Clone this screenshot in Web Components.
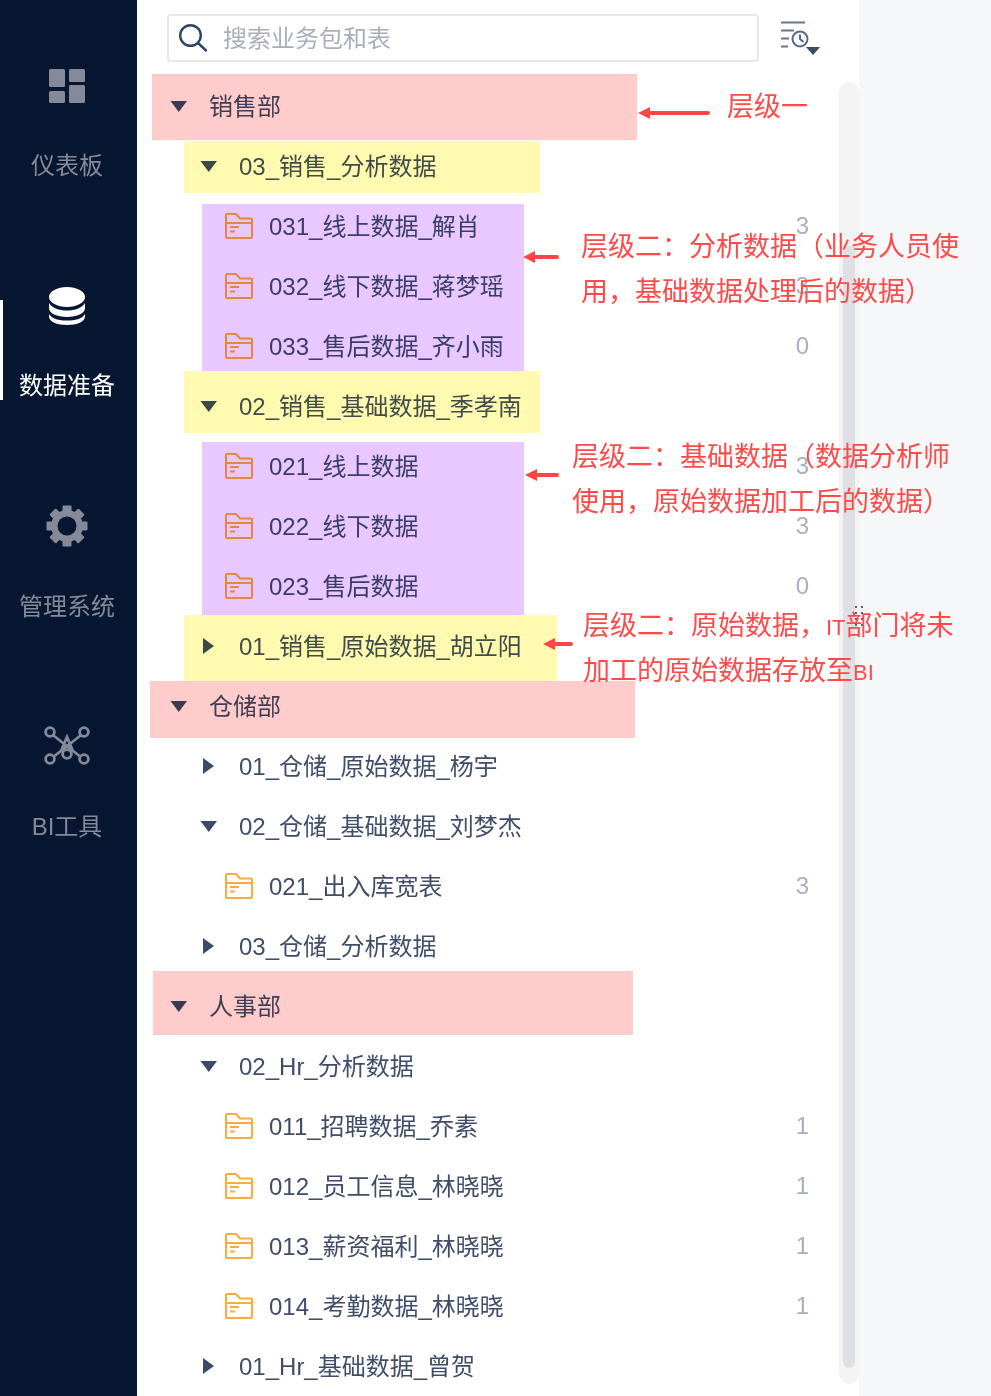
<!DOCTYPE html>
<html lang="zh">
<head>
<meta charset="utf-8">
<title>数据准备</title>
<style>
  html, body {
    margin: 0;
    height: 100%;
    background: #f6f7f9;
    font-family: "Liberation Sans", "Noto Sans CJK SC", sans-serif;
  }
  body { overflow: hidden; }
</style>
</head>
<body>
<app-shell>
  <side-nav slot="nav">
    <nav-item icon="dashboard">仪表板</nav-item>
    <nav-item icon="database" active>数据准备</nav-item>
    <nav-item icon="gear">管理系统</nav-item>
    <nav-item icon="bi">BI工具</nav-item>
  </side-nav>
  <search-bar slot="search" placeholder="搜索业务包和表"></search-bar>

  <tree-row level="0" caret="down">销售部</tree-row>
  <tree-row level="1" caret="down">03_销售_分析数据</tree-row>
  <tree-row level="2" folder count="3">031_线上数据_解肖</tree-row>
  <tree-row level="2" folder count="3">032_线下数据_蒋梦瑶</tree-row>
  <tree-row level="2" folder count="0">033_售后数据_齐小雨</tree-row>
  <tree-row level="1" caret="down">02_销售_基础数据_季孝南</tree-row>
  <tree-row level="2" folder count="3">021_线上数据</tree-row>
  <tree-row level="2" folder count="3">022_线下数据</tree-row>
  <tree-row level="2" folder count="0">023_售后数据</tree-row>
  <tree-row level="1" caret="right">01_销售_原始数据_胡立阳</tree-row>
  <tree-row level="0" caret="down">仓储部</tree-row>
  <tree-row level="1" caret="right">01_仓储_原始数据_杨宇</tree-row>
  <tree-row level="1" caret="down">02_仓储_基础数据_刘梦杰</tree-row>
  <tree-row level="2" folder count="3">021_出入库宽表</tree-row>
  <tree-row level="1" caret="right">03_仓储_分析数据</tree-row>
  <tree-row level="0" caret="down">人事部</tree-row>
  <tree-row level="1" caret="down">02_Hr_分析数据</tree-row>
  <tree-row level="2" folder count="1">011_招聘数据_乔素</tree-row>
  <tree-row level="2" folder count="1">012_员工信息_林晓晓</tree-row>
  <tree-row level="2" folder count="1">013_薪资福利_林晓晓</tree-row>
  <tree-row level="2" folder count="1">014_考勤数据_林晓晓</tree-row>
  <tree-row level="1" caret="right">01_Hr_基础数据_曾贺</tree-row>

  <!-- 标注层: 截图上画的色块、箭头和说明 -->
  <mark-box slot="overlay" tone="pink" box="152,74,485,66"></mark-box>
  <mark-box slot="overlay" tone="yellow" box="184,141,356,52"></mark-box>
  <mark-box slot="overlay" tone="purple" box="202,204,322,167"></mark-box>
  <mark-box slot="overlay" tone="yellow" box="184,371,356,62"></mark-box>
  <mark-box slot="overlay" tone="purple" box="202,442,322,173"></mark-box>
  <mark-box slot="overlay" tone="yellow" box="184,615,373,66"></mark-box>
  <mark-box slot="overlay" tone="pink" box="150,681,485,57"></mark-box>
  <mark-box slot="overlay" tone="pink" box="153,971,480,64"></mark-box>

  <note-arrow slot="overlay" box="638,113,72"></note-arrow>
  <note-arrow slot="overlay" box="523,257,36"></note-arrow>
  <note-arrow slot="overlay" box="525,475,34"></note-arrow>
  <note-arrow slot="overlay" box="543,644,30"></note-arrow>

  <note-text slot="overlay" at="727,85">层级一</note-text>
  <note-text slot="overlay" at="581,225">层级二：分析数据（业务人员使<br>用，基础数据处理后的数据）</note-text>
  <note-text slot="overlay" at="572,435">层级二：基础数据（数据分析师<br>使用，原始数据加工后的数据）</note-text>
  <note-text slot="overlay" at="583,604">层级二：原始数据，<small>IT</small>部门将未<br>加工的原始数据存放至<small>BI</small></note-text>
</app-shell>

<script>
// 外壳: 左侧导航 + 中间面板 + 右侧留白
class AppShell extends HTMLElement {
  constructor() {
    super()
    this.attachShadow({ mode: 'open' }).innerHTML = `
      <style>
        :host { display: flex; height: 1396px; overflow: hidden; position: relative; }
        .nav { flex: 0 0 137px; }
        .panel {
          flex: 0 0 722px;
          background: #fff;
          padding-top: 14px;
          box-sizing: border-box;
          height: 1396px;
          overflow: hidden;
          position: relative;
        }
        .tree { margin-top: 14px; display: flex; flex-direction: column; }
        .track {
          position: absolute; left: 702px; top: 82px; width: 20px; height: 1302px;
          background: #f3f3f4; border-radius: 10px;
        }
        .thumb {
          position: absolute; left: 4px; top: 164px; width: 12px; height: 1122px;
          background: #dfe0e5; border-radius: 0 0 6px 6px;
        }
        .grip {
          position: absolute; left: 855px; top: 606px;
          display: grid; grid-template-columns: 2px 2px; gap: 4px;
        }
        .grip i { width: 2px; height: 2px; background: #4f5f7c; }
      </style>
      <div class="nav"><slot name="nav"></slot></div>
      <div class="panel">
        <slot name="search"></slot>
        <div class="tree"><slot></slot></div>
        <div class="track"><div class="thumb"></div></div>
      </div>
      <div class="grip"><i></i><i></i><i></i><i></i><i></i><i></i><i></i><i></i></div>
      <slot name="overlay"></slot>
    `
  }
}

class SideNav extends HTMLElement {
  constructor() {
    super()
    this.attachShadow({ mode: 'open' }).innerHTML = `
      <style>
        :host {
          display: flex; flex-direction: column; gap: 80px;
          height: 1396px; box-sizing: border-box; padding-top: 46px;
          background: #071631;
        }
      </style>
      <slot></slot>
    `
  }
}

const NAV_ICONS = {
  dashboard: `<svg width="36" height="34" viewBox="0 0 36 34" fill="currentColor">
      <rect x="0" y="0" width="16" height="18" rx="1.5"/><rect x="0" y="22" width="16" height="12" rx="1.5"/>
      <rect x="20" y="0" width="16" height="13" rx="1.5"/><rect x="20" y="16" width="16" height="18" rx="1.5"/>
    </svg>`,
  database: `<svg width="36" height="38" viewBox="0 0 36 38" fill="currentColor">
      <ellipse cx="18" cy="10" rx="18" ry="10"/>
      <path d="M0 16c3 5 10 7.500 18 7.500S33 21 36 16v5c0 5.500-8 9-18 9S0 26.500 0 21z"/>
      <path d="M0 27c3 5 10 6.500 18 6.500S33 32 36 27v2.500C36 34.500 28 38 18 38S0 34.500 0 29.500z"/>
    </svg>`,
  gear: `<svg width="42" height="42" viewBox="-21 -21 42 42" fill="currentColor">
      <g>
        <rect x="-4.500" y="-20.500" width="9" height="41" rx="1"/>
        <rect x="-4.500" y="-20.500" width="9" height="41" rx="1" transform="rotate(45)"/>
        <rect x="-4.500" y="-20.500" width="9" height="41" rx="1" transform="rotate(90)"/>
        <rect x="-4.500" y="-20.500" width="9" height="41" rx="1" transform="rotate(135)"/>
      </g>
      <circle r="12.500" fill="none" stroke="currentColor" stroke-width="7"/>
      <circle r="9.500" fill="#071631"/>
    </svg>`,
  bi: `<svg width="48" height="42" viewBox="0 0 48 42" fill="none" stroke="currentColor" stroke-width="2.800">
      <circle cx="7" cy="7" r="4.400"/><circle cx="41" cy="7" r="4.400"/>
      <circle cx="7" cy="34" r="4.400"/><circle cx="41" cy="34" r="4.400"/>
      <circle cx="24" cy="29" r="4.400"/>
      <path d="M10.500 10.500l26 20.500M37.500 10.500l-26 20.500M18.500 25L24 12l5.500 13"/>
    </svg>`,
}

class NavItem extends HTMLElement {
  constructor() {
    super()
    this.attachShadow({ mode: 'open' }).innerHTML = `
      <style>
        :host {
          display: flex; flex-direction: column; align-items: center; gap: 41px;
          position: relative; height: 140px; box-sizing: border-box; padding: 20px 3px 0 0;
          color: #858a98; font-size: 24px; line-height: 40px;
        }
        :host([active]) { color: #fff; }
        :host([active])::before {
          content: ''; position: absolute; left: 0; top: 34px; width: 3px; height: 100px; background: #fff;
        }
        .icon { height: 40px; display: flex; align-items: center; justify-content: center; }
        .label { height: 40px; white-space: nowrap; }
      </style>
      <div class="icon">${NAV_ICONS[this.getAttribute('icon')] || ''}</div>
      <div class="label"><slot></slot></div>
    `
  }
}

class SearchBar extends HTMLElement {
  constructor() {
    super()
    this.attachShadow({ mode: 'open' }).innerHTML = `
      <style>
        :host { display: flex; align-items: center; height: 48px; padding-left: 30px; }
        .box {
          flex: 0 0 592px; height: 48px; box-sizing: border-box;
          display: flex; align-items: center; gap: 14px; padding-left: 10px;
          border: 2px solid #e6e8ee; border-radius: 4px;
          font-size: 24px; color: #a9aebb;
        }
        .box span { padding-bottom: 4px; }
        .filter { margin-left: 22px; margin-top: 2px; display: block; }
      </style>
      <div class="box">
        <svg width="30" height="30" viewBox="0 0 30 30" fill="none" stroke="#2f4566" stroke-width="2.400" stroke-linecap="round">
          <circle cx="11.500" cy="12.500" r="10.300"/><path d="M19.500 20.500l7.500 7"/>
        </svg>
        <span>${this.getAttribute('placeholder')}</span>
      </div>
      <svg class="filter" width="40" height="36" viewBox="0 0 40 36" fill="none">
        <path d="M0 1.500h24M0 9.500h13M0 17.500h8M0 25.500h7" stroke="#6c7686" stroke-width="2"/>
        <circle cx="19" cy="18" r="7.500" stroke="#56698a" stroke-width="2"/>
        <path d="M19 13.500V18l3.500 3" stroke="#56698a" stroke-width="2"/>
        <path d="M25 26h14l-7 8z" fill="#3b4a66"/>
      </svg>
    `
  }
}

class TreeRow extends HTMLElement {
  constructor() {
    super()
    const level = Number(this.getAttribute('level') || 0)
    const caret = this.getAttribute('caret')
    const count = this.getAttribute('count')
    const pad = this.hasAttribute('folder') ? 88 : 27 + level * 30
    let lead = ''
    if (caret === 'down') {
      lead = `<svg class="lead" width="30" height="12" viewBox="0 0 30 12"><path d="M6.500 1h16.500l-8.250 11z" fill="#3a4a68"/></svg>`
    } else if (caret === 'right') {
      lead = `<svg class="lead" width="30" height="16" viewBox="0 0 30 16"><path d="M9 0l11 8-11 8z" fill="#3a4a68"/></svg>`
    } else {
      lead = `<svg class="lead folder" width="28" height="26" viewBox="0 0 28 26" fill="none" stroke="#fdab3f" stroke-width="2">
          <path d="M1 2a1 1 0 0 1 1-1h9l4 4.500h11a1 1 0 0 1 1 1V24a1 1 0 0 1-1 1H2a1 1 0 0 1-1-1z"/>
          <path d="M1 10h26M5 14h9M5 18.500h5"/>
        </svg>`
    }
    this.attachShadow({ mode: 'open' }).innerHTML = `
      <style>
        :host {
          display: flex; align-items: center; height: 60px;
          padding-left: ${pad}px; padding-right: 50px; box-sizing: border-box;
          font-size: 24px; color: #3f4d69; white-space: nowrap;
        }
        .lead { flex: none; margin-right: 15px; }
        .folder { margin-right: 16px; margin-top: -1px; }
        .name { padding-bottom: 4px; }
        .count { margin-left: auto; color: #a9b0bd; }
      </style>
      ${lead}
      <span class="name"><slot></slot></span>
      ${count !== null ? `<span class="count">${count}</span>` : ''}
    `
  }
}

// 色块用 multiply 压在树上, 文字颜色和原图一样被染色
const TONES = { pink: '#ffcccc', yellow: '#fffab0', purple: '#e8c8ff' }

class MarkBox extends HTMLElement {
  constructor() {
    super()
    const [x, y, w, h] = this.getAttribute('box').split(',')
    this.attachShadow({ mode: 'open' }).innerHTML = `
      <style>
        :host {
          display: block; position: absolute;
          left: ${x}px; top: ${y}px; width: ${w}px; height: ${h}px;
          background: ${TONES[this.getAttribute('tone')]};
          mix-blend-mode: multiply;
        }
      </style>
    `
  }
}

class NoteArrow extends HTMLElement {
  constructor() {
    super()
    const [x, y, w] = this.getAttribute('box').split(',').map(Number)
    this.attachShadow({ mode: 'open' }).innerHTML = `
      <style>
        :host { display: block; position: absolute; left: ${x}px; top: ${y - 7}px; width: ${w}px; height: 14px; }
        svg { display: block; }
      </style>
      <svg width="${w}" height="14" viewBox="0 0 ${w} 14">
        <path d="M0 7l12-6v4h${w - 14}a2 2 0 0 1 0 4H12v4z" fill="#ff4545"/>
      </svg>
    `
  }
}

class NoteText extends HTMLElement {
  constructor() {
    super()
    const [x, y] = this.getAttribute('at').split(',')
    this.attachShadow({ mode: 'open' }).innerHTML = `
      <style>
        :host {
          display: block; position: absolute; left: ${x}px; top: ${y}px;
          font-size: 27px; line-height: 45px; color: #ff4a4a; white-space: nowrap;
        }
        ::slotted(small) { font-size: 22px; line-height: 1; }
      </style>
      <slot></slot>
    `
  }
}

customElements.define('app-shell', AppShell)
customElements.define('side-nav', SideNav)
customElements.define('nav-item', NavItem)
customElements.define('search-bar', SearchBar)
customElements.define('tree-row', TreeRow)
customElements.define('mark-box', MarkBox)
customElements.define('note-arrow', NoteArrow)
customElements.define('note-text', NoteText)
</script>
</body>
</html>
